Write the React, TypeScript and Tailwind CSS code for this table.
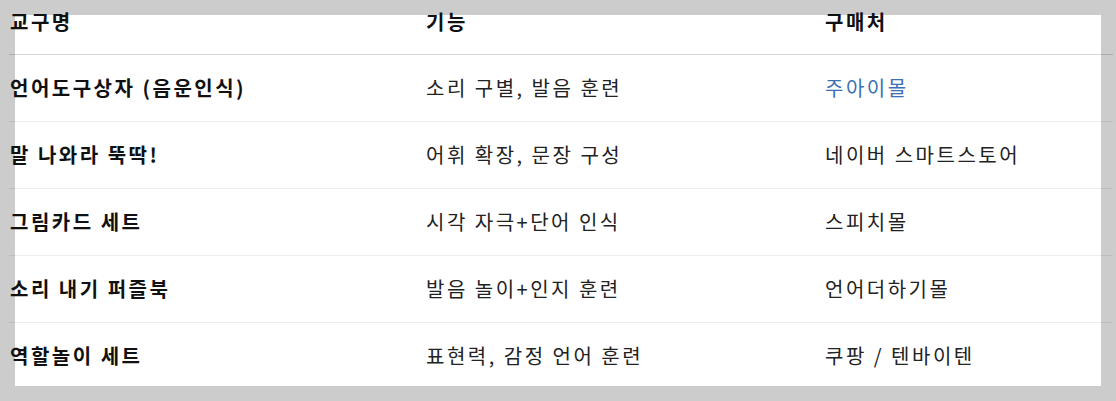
import React from "react";

const rows = [
  { name: "언어도구상자 (음운인식)", fn: "소리 구별, 발음 훈련", shop: "주아이몰", link: true },
  { name: "말 나와라 뚝딱!", fn: "어휘 확장, 문장 구성", shop: "네이버 스마트스토어" },
  { name: "그림카드 세트", fn: "시각 자극+단어 인식", shop: "스피치몰" },
  { name: "소리 내기 퍼즐북", fn: "발음 놀이+인지 훈련", shop: "언어더하기몰" },
  { name: "역할놀이 세트", fn: "표현력, 감정 언어 훈련", shop: "쿠팡 / 텐바이텐" },
];

export default function App() {
  return (
    <div
      className="w-[1116px] h-[401px] bg-[#cccccc] pt-[15px] pl-[15px] overflow-hidden"
      style={{ fontFamily: '"Noto Sans CJK KR", "Noto Sans", sans-serif' }}
    >
      <div className="flow-root w-[1086px] h-[371px] bg-white">
        <table className="-ml-[6px] -mt-[15px] w-[1104px] border-collapse text-[20px] tracking-[2.5px] text-[#222]">
          <thead>
            <tr className="border-b border-[rgba(0,0,0,0.16)]">
              <th className="w-[416px] pl-[1px] pt-[2px] pb-[12px] text-left font-bold text-[#111] leading-[40px] align-middle">교구명</th>
              <th className="w-[399px] pl-[1px] pt-[2px] pb-[12px] text-left font-bold text-[#111] leading-[40px] align-middle">기능</th>
              <th className="pl-[1px] pt-[2px] pb-[12px] text-left font-bold text-[#111] leading-[40px] align-middle">구매처</th>
            </tr>
          </thead>
          <tbody>
            {rows.map((r, i) => (
              <tr key={i} className={i < rows.length - 1 ? "border-b border-[rgba(0,0,0,0.07)]" : ""}>
                <td className="pl-[1px] h-[67px] font-bold text-[#111] align-middle">{r.name}</td>
                <td className="pl-[1px] h-[67px] align-middle">{r.fn}</td>
                <td className={"pl-[1px] h-[67px] align-middle " + (r.link ? "text-[#3b70b4]" : "")}>{r.shop}</td>
              </tr>
            ))}
          </tbody>
        </table>
      </div>
    </div>
  );
}
